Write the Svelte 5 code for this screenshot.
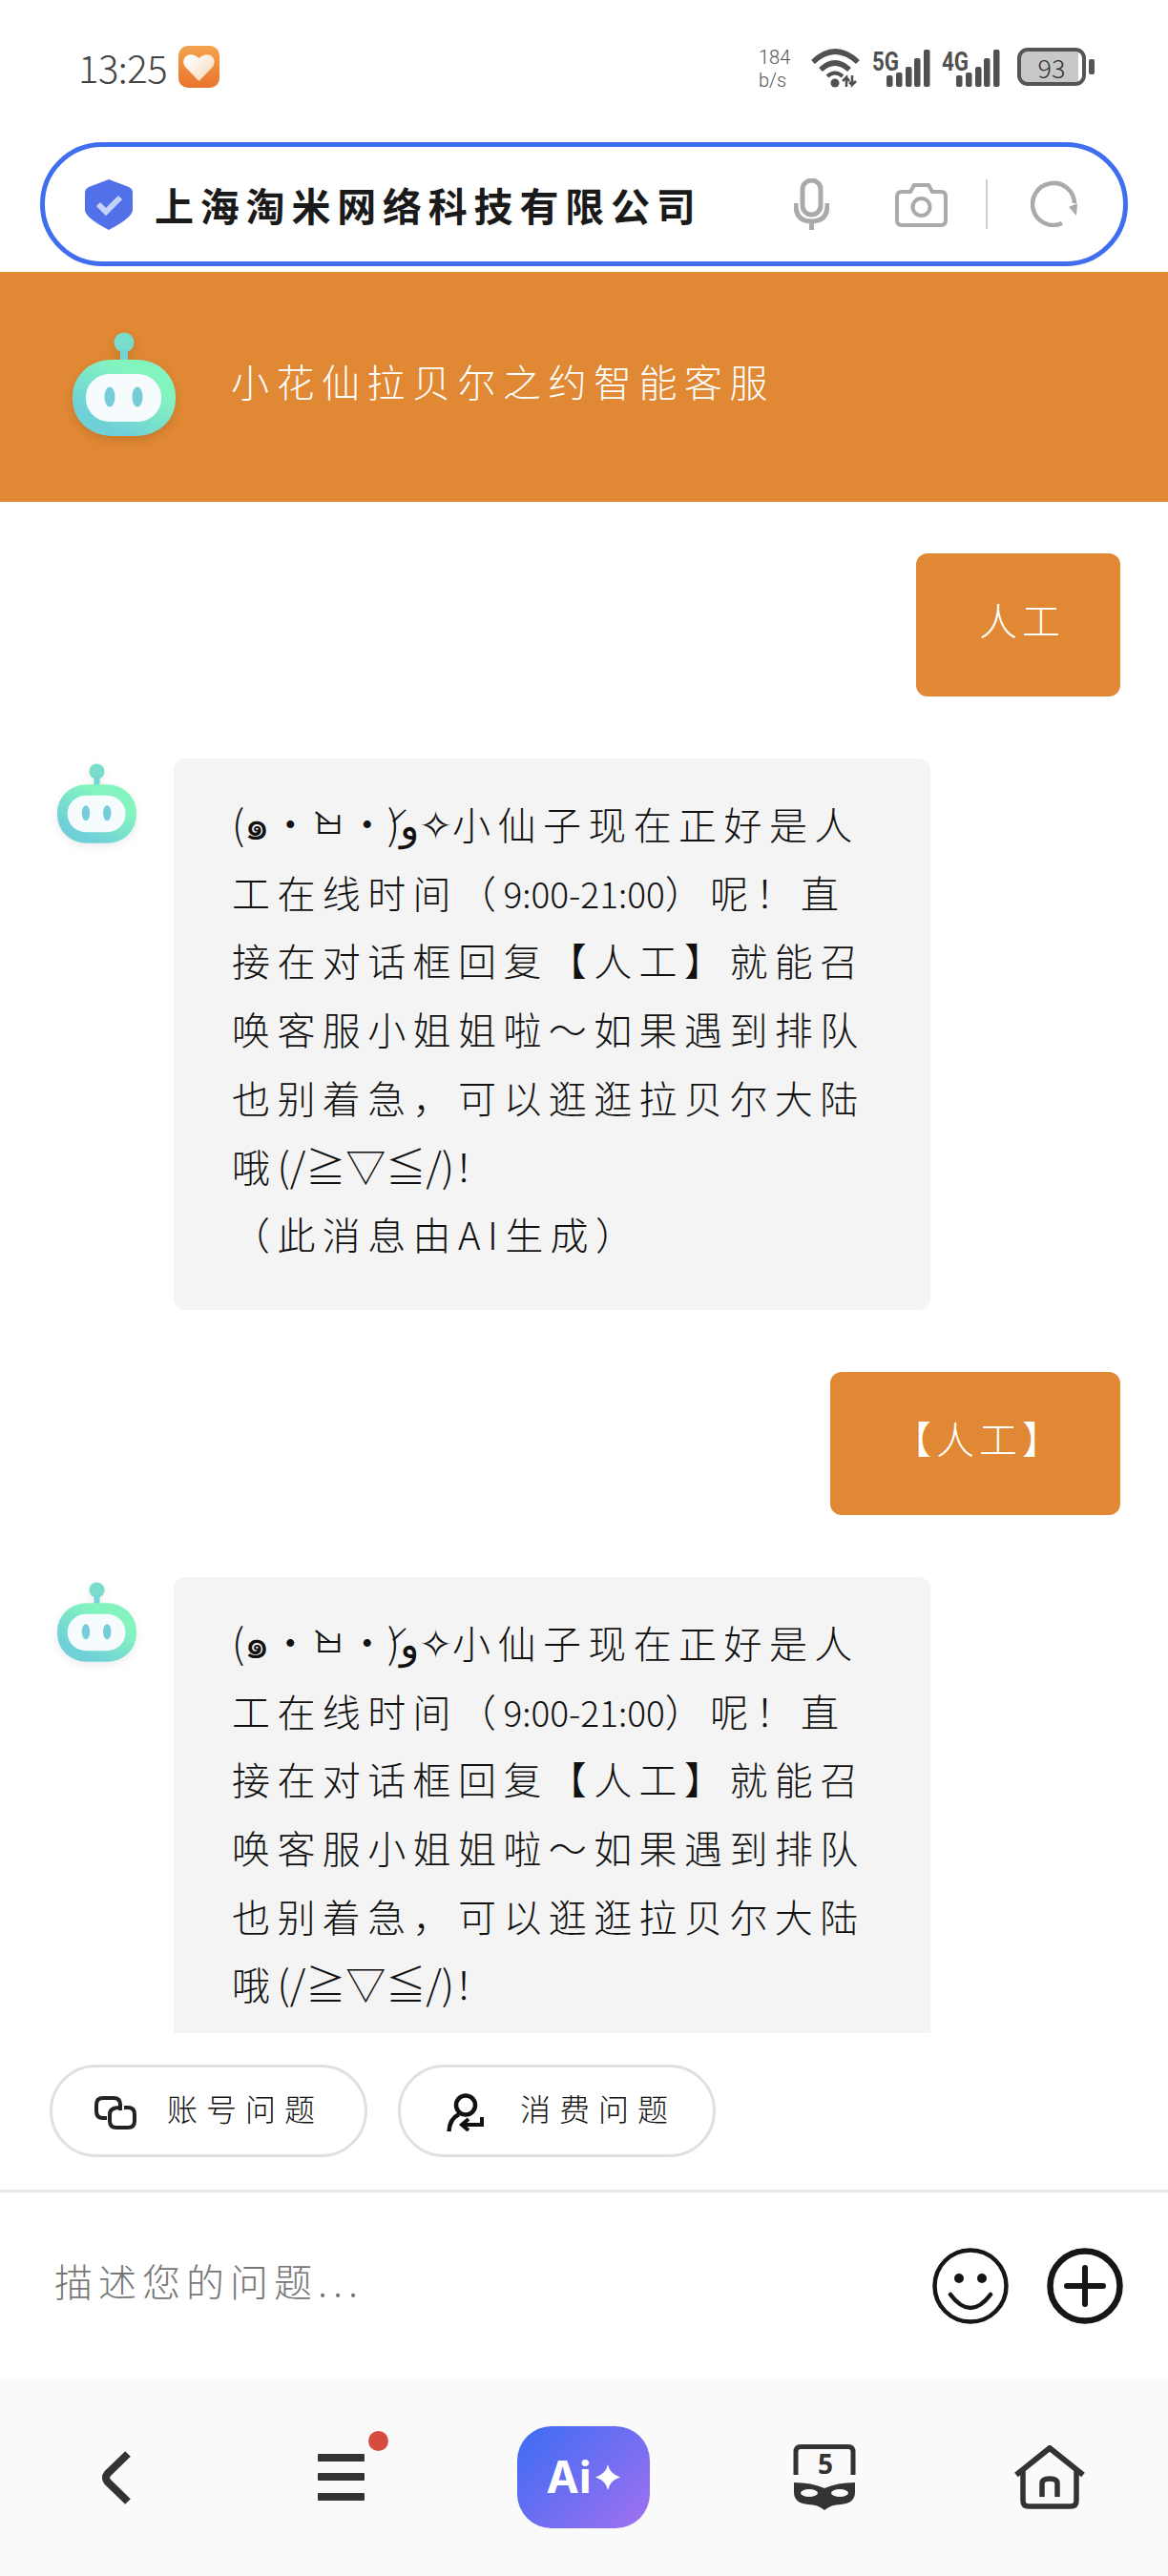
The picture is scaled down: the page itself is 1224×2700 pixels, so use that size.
<script>
  // kao and num parts sit tighter than the rest of the line
  const answer = [
    [{ kao: '(๑•̀ㅂ•́)و✧' }, { text: '小仙子现在正好是人' }],
    [{ text: '工在线时间（' }, { num: '9:00-21:00' }, { text: '）呢！直' }],
    [{ text: '接在对话框回复【人工】就能召' }],
    [{ text: '唤客服小姐姐啦～如果遇到排队' }],
    [{ text: '也别着急，可以逛逛拉贝尔大陆' }],
    [{ text: '哦' }, { kao: '(/≧▽≦/)' }, { text: '！' }],
    [{ text: '（此消息由AI生成）' }]
  ];
  const bars = [
    [0, 12],
    [10, 15],
    [20, 21],
    [29, 30],
    [39, 39]
  ];
</script>

{#snippet robot(cls)}
  <svg class={cls} viewBox="0 0 108 112" aria-hidden="true">
    <defs>
      <linearGradient id="robot-skin" x1="0.85" y1="0.15" x2="0.2" y2="0.95">
        <stop offset="0.2" stop-color="#84f4bf" />
        <stop offset="0.85" stop-color="#6fd0d8" />
      </linearGradient>
    </defs>
    <circle cx="54" cy="11" r="10.5" fill="#7adccb" />
    <rect x="50" y="18" width="8" height="14" fill="#74d6d2" />
    <rect x="0" y="29" width="108" height="80" rx="40" ry="38" fill="url(#robot-skin)" />
    <rect x="14" y="44" width="79" height="50" rx="25" ry="24" fill="#f6fcfd" />
    <ellipse cx="39" cy="68" rx="5.500" ry="10.500" fill="#76ccd8" />
    <ellipse cx="68" cy="68" rx="5.500" ry="10.500" fill="#76ccd8" />
  </svg>
{/snippet}

{#snippet signal(label)}
  <svg class="signal" viewBox="0 0 62 42" aria-hidden="true">
    <text x="0" y="24" textLength="28" lengthAdjust="spacingAndGlyphs">{label}</text>
    {#each bars as [x, h]}
      <rect x={15 + x} y={41 - h} width="6.5" height={h} rx="2" fill="#505050" />
    {/each}
  </svg>
{/snippet}

{#snippet reply(lines)}
  <div class="theirs">
    {@render robot('robot-small')}
    <div class="bubble">
      {#each lines as line}
        <div>
          {#each line as part}
            {#if part.kao}<span class="kao">{part.kao}</span>{:else if part.num}<span class="num">{part.num}</span>{:else}{part.text}{/if}
          {/each}
        </div>
      {/each}
    </div>
  </div>
{/snippet}

<div class="page">
  <div class="status">
    <span class="time">13:25</span>
    <svg class="heart-app" viewBox="0 0 43 44" aria-hidden="true">
      <defs>
        <linearGradient id="heart-bg" x1="0" y1="0" x2="0" y2="1">
          <stop offset="0" stop-color="#f4a24e" />
          <stop offset="1" stop-color="#e8742d" />
        </linearGradient>
        <linearGradient id="heart-fg" x1="0.1" y1="0.1" x2="0.9" y2="0.9">
          <stop offset="0" stop-color="#ffffff" />
          <stop offset="1" stop-color="#f9d9ba" />
        </linearGradient>
      </defs>
      <rect width="43" height="44" rx="10" fill="url(#heart-bg)" />
      <path d="M21.5 37 L7 22 C1 13 12 4 21.5 13 C31 4 42 13 36 22 Z" fill="url(#heart-fg)" />
    </svg>
    <span class="speed">184<br />b/s</span>
    <svg class="wifi" viewBox="0 0 52 42" aria-hidden="true">
      <g fill="none" stroke="#505050" stroke-width="5.5">
        <path d="M2 15 Q25 -7 49 15" />
        <path d="M10 23 Q25 9 40 23" />
        <path d="M17 30 Q25 23 33 30" stroke-width="4" />
      </g>
      <circle cx="25" cy="37" r="4.5" fill="#505050" />
      <path d="M37 41 V31 L33 35 M37 31 L40 35 M43 29 V39 L47 35 M43 39 L40 36" fill="none" stroke="#505050" stroke-width="2.5" />
    </svg>
    {@render signal('5G')}
    {@render signal('4G')}
    <div class="battery">
      <div class="battery-body"><span>93</span></div>
      <i></i>
    </div>
  </div>

  <div class="search-wrap">
    <div class="search">
      <svg class="shield" viewBox="0 0 50 54" aria-hidden="true">
        <path d="M25 1 L46 9 Q50 11 50 15 V33 Q50 41 25 54 Q0 41 0 33 V15 Q0 11 4 9 Z" fill="#5271e8" />
        <path d="M14 27 L22 35 L37 20" fill="none" stroke="#c6d2fa" stroke-width="6" />
      </svg>
      <span class="company">上海淘米网络科技有限公司</span>
      <svg class="mic" viewBox="0 0 37 54" aria-hidden="true">
        <rect x="9" y="2" width="19" height="36" rx="9.5" fill="none" stroke="#aaa" stroke-width="5" />
        <path d="M2 26 V28 Q2 45 18.5 45 Q35 45 35 28 V26 M18.5 45 V54" fill="none" stroke="#aaa" stroke-width="5" />
      </svg>
      <svg class="camera" viewBox="0 0 55 47" aria-hidden="true">
        <path d="M7 10 H16 L20 3 H35 L39 10 H48 Q53 10 53 15 V40 Q53 45 48 45 H7 Q2 45 2 40 V15 Q2 10 7 10 Z" fill="none" stroke="#aaa" stroke-width="4" />
        <circle cx="27.5" cy="26" r="9" fill="none" stroke="#aaa" stroke-width="4" />
      </svg>
      <span class="sep"></span>
      <svg class="refresh" viewBox="0 0 50 50" aria-hidden="true">
        <path d="M46 24 A22 22 0 1 0 33 45" fill="none" stroke="#aaa" stroke-width="4.5" />
        <path d="M40 28 L49 24 L48 37 Z" fill="#aaa" />
      </svg>
    </div>
  </div>

  <header class="banner">
    {@render robot('robot-big')}
    <span class="banner-title">小花仙拉贝尔之约智能客服</span>
  </header>

  <main class="chat">
    <div class="mine">人工</div>
    {@render reply(answer)}
    <div class="mine">【人工】</div>
    <!-- the closing line is scrolled out of view here -->
    {@render reply(answer.slice(0, 6))}
  </main>

  <div class="chips">
    <button type="button" class="chip">
      <svg class="link" viewBox="0 0 44 35" aria-hidden="true">
        <path d="M13 23 H9 Q2 23 2 16 V9 Q2 2 9 2 H20 Q27 2 27 9 V15" fill="none" stroke="#222" stroke-width="4" />
        <path d="M27 12 Q16 12 16 19 V26 Q16 33 23 33 H35 Q42 33 42 26 V19 Q42 12 35 12 H31" fill="none" stroke="#222" stroke-width="4" />
      </svg>
      <span>账号问题</span>
    </button>
    <button type="button" class="chip">
      <svg class="person" viewBox="0 0 40 40" aria-hidden="true">
        <circle cx="20" cy="12.5" r="10" fill="none" stroke="#111" stroke-width="4.5" />
        <path d="M2.5 40 Q3 27 13 22" fill="none" stroke="#111" stroke-width="4.5" />
        <path d="M37 25 V33 H18 M23 27 L16 33 L23 39" fill="none" stroke="#111" stroke-width="4" />
      </svg>
      <span>消费问题</span>
    </button>
  </div>

  <div class="composer">
    <span class="placeholder">描述您的问题...</span>
    <svg class="round-icon" viewBox="0 0 80 80" aria-hidden="true">
      <circle cx="40" cy="40" r="37.5" fill="none" stroke="#161616" stroke-width="4.5" />
      <circle cx="28" cy="32" r="5" fill="#161616" />
      <circle cx="52" cy="32" r="5" fill="#161616" />
      <path d="M19 49 Q40 77 61 49" fill="none" stroke="#161616" stroke-width="4.5" stroke-linecap="round" />
    </svg>
    <svg class="round-icon plus" viewBox="0 0 80 80" aria-hidden="true">
      <circle cx="40" cy="40" r="36.5" fill="none" stroke="#161616" stroke-width="6.5" />
      <path d="M21 40 H59 M40 21 V59" fill="none" stroke="#161616" stroke-width="6" stroke-linecap="round" />
    </svg>
  </div>

  <nav class="nav">
    <svg class="back" viewBox="0 0 32 58" aria-hidden="true">
      <path d="M28 4 L6.5 25 Q3.5 29 6.5 33 L28 54" fill="none" stroke="#333" stroke-width="8" />
    </svg>
    <div class="menu">
      <i></i><i></i><i></i>
      <b class="dot"></b>
    </div>
    <div class="ai">
      <span>Ai</span>
      <svg viewBox="0 0 26 27" aria-hidden="true">
        <path d="M13 0 Q15 10 26 13.5 Q15 17 13 27 Q11 17 0 13.5 Q11 10 13 0 Z" fill="#fff" />
      </svg>
    </div>
    <svg class="five" viewBox="0 0 66 69" aria-hidden="true">
      <path d="M3 32 V8 Q3 2.500 8 2.500 H58 Q63 2.500 63 8 V32" fill="none" stroke="#333" stroke-width="5" />
      <text x="34" y="31" text-anchor="middle">5</text>
      <path d="M1 40 Q20 40 33 46 Q46 40 65 40 V50 Q65 62 50 63 Q40 63 33 69 Q26 63 16 63 Q1 62 1 50 Z" fill="#333" />
      <ellipse cx="17" cy="51" rx="9" ry="4" fill="#fafafa" />
      <ellipse cx="49" cy="51" rx="9" ry="4" fill="#fafafa" />
    </svg>
    <svg class="home" viewBox="0 0 74 67" aria-hidden="true">
      <path d="M2 31 L37 3 L72 31" fill="none" stroke="#333" stroke-width="6" />
      <path d="M9 27 V58 Q9 64 15 64 H59 Q65 64 65 58 V27" fill="none" stroke="#333" stroke-width="5.500" />
      <path d="M29 54 V40 Q29 35 37 35 Q45 35 45 40 V54" fill="none" stroke="#333" stroke-width="5.500" />
    </svg>
  </nav>
</div>

<style>
  :global(body) {
    margin: 0;
    background: #fff;
  }

  .page {
    --cjk: "Noto Sans CJK SC", "Noto Sans", sans-serif;
    width: 1224px;
    height: 2700px;
    display: flex;
    flex-direction: column;
    overflow: hidden;
    font-family: var(--cjk);
    color: #111;
  }

  .status {
    height: 149px;
    flex-shrink: 0;
    box-sizing: border-box;
    padding: 48px 0 0 82px;
    display: flex;
    align-items: flex-start;
  }

  .time {
    width: 105px;
    font-size: 40px;
    font-weight: 300;
    line-height: 44px;
    color: #444;
    letter-spacing: -0.5px;
  }

  .heart-app {
    width: 43px;
    height: 44px;
  }

  .speed {
    margin-left: 565px;
    width: 55px;
    font-family: Roboto, sans-serif;
    font-size: 20px;
    font-weight: 300;
    line-height: 24px;
    color: #555;
  }

  .wifi {
    width: 52px;
    height: 42px;
    margin-top: 2px;
  }

  .signal {
    width: 62px;
    height: 42px;
    margin: 2px 0 0 12px;
  }

  .signal + .signal {
    margin-left: 11px;
  }

  .signal text {
    font-family: "Roboto", sans-serif;
    font-weight: 700;
    font-size: 27px;
    fill: #505050;
  }

  .battery {
    display: flex;
    align-items: center;
    margin: 2px 0 0 17px;
  }

  .battery-body {
    width: 72px;
    height: 40px;
    box-sizing: border-box;
    border: 4px solid #555;
    border-radius: 11px;
    background: linear-gradient(to right, #c8c8c8 93%, #fff 93%);
    display: flex;
    align-items: center;
    justify-content: center;
    font-size: 27px;
    font-weight: 300;
    color: #333;
  }

  .battery i {
    width: 6px;
    height: 16px;
    margin-left: 3px;
    border-radius: 2px;
    background: #555;
  }

  .search-wrap {
    height: 136px;
    flex-shrink: 0;
    padding: 0 42px;
  }

  .search {
    height: 130px;
    box-sizing: border-box;
    border: 5px solid #3f6fee;
    border-radius: 65px;
    padding-left: 42px;
    display: flex;
    align-items: center;
  }

  .shield {
    width: 50px;
    height: 54px;
    flex-shrink: 0;
  }

  .company {
    width: 670px;
    margin-left: 23px;
    font-size: 41px;
    font-weight: 700;
    letter-spacing: 6.800px;
    white-space: nowrap;
    color: #1a1a1a;
  }

  .mic {
    width: 37px;
    height: 54px;
  }

  .camera {
    width: 55px;
    height: 47px;
    margin-left: 69px;
  }

  .sep {
    width: 2px;
    height: 52px;
    margin-left: 40px;
    background: #ccc;
  }

  .refresh {
    width: 50px;
    height: 50px;
    margin-left: 45px;
  }

  .banner {
    height: 241px;
    flex-shrink: 0;
    box-sizing: border-box;
    padding-left: 76px;
    background: #e08833;
    display: flex;
    align-items: center;
    gap: 58px;
    color: #fff;
    font-size: 40px;
    font-weight: 300;
    letter-spacing: 7.500px;
  }

  .banner-title {
    padding-bottom: 14px;
  }

  .robot-big {
    width: 108px;
    height: 112px;
    margin-top: -3px;
    filter: drop-shadow(0 4px 5px rgba(0, 0, 0, 0.12));
  }

  .robot-small {
    width: 83px;
    height: 86px;
    flex-shrink: 0;
    margin-top: 5px;
    filter: drop-shadow(0 3px 4px rgba(0, 0, 0, 0.08));
  }

  .chat {
    height: 1605px;
    flex-shrink: 0;
    box-sizing: border-box;
    padding: 54px 50px 0 60px;
    overflow: hidden;
    display: flex;
    flex-direction: column;
    gap: 65px;
  }

  .mine {
    align-self: flex-end;
    padding: 33px 58px 45px 66px;
    background: #e08833;
    border-radius: 12px;
    color: #fff;
    font-size: 40px;
    font-weight: 300;
    line-height: 72px;
    letter-spacing: 5px;
  }

  .theirs {
    display: flex;
    align-items: flex-start;
    flex-shrink: 0;
    gap: 39px;
  }

  .bubble {
    width: 793px;
    box-sizing: border-box;
    padding: 33px 0 43px 61px;
    background: #f4f4f4;
    border-radius: 12px;
    font-size: 40px;
    font-weight: 300;
    line-height: 71.700px;
    letter-spacing: 7.400px;
    white-space: nowrap;
    color: #111;
  }

  /* line-height 0 keeps the odd font sizes from stretching the 71.7px lines */
  .kao {
    font-size: 42px;
    line-height: 0;
    letter-spacing: 0;
  }

  .num {
    font-size: 37px;
    line-height: 0;
    letter-spacing: 0;
  }

  .chips {
    height: 167px;
    flex-shrink: 0;
    box-sizing: border-box;
    padding: 33px 0 0 52px;
    display: flex;
    align-items: flex-start;
    gap: 32px;
    border-bottom: 3px solid #e8e8e8;
  }

  .chip {
    width: 333px;
    height: 97px;
    box-sizing: border-box;
    padding: 0 0 0 42px;
    border: 3px solid #e0e0e0;
    border-radius: 49px;
    background: #fff;
    display: flex;
    align-items: center;
    font-family: var(--cjk);
    font-size: 32px;
    font-weight: 300;
    letter-spacing: 9px;
    color: #111;
  }

  .chip span {
    padding-bottom: 8px;
  }

  .link {
    width: 44px;
    height: 35px;
    margin: 3px 32px 0 2px;
  }

  .person {
    width: 40px;
    height: 40px;
    margin: 2px 37px 0 6px;
  }

  .composer {
    flex: 1;
    display: flex;
    align-items: center;
    padding: 0 47px 0 57px;
  }

  .placeholder {
    padding-bottom: 10px;
    font-size: 40px;
    font-weight: 300;
    letter-spacing: 6px;
    color: #777;
    margin-right: auto;
  }

  .round-icon {
    width: 80px;
    height: 80px;
    margin-top: 2px;
  }

  .plus {
    margin-left: 40px;
  }

  .nav {
    height: 208px;
    flex-shrink: 0;
    box-sizing: border-box;
    padding: 0 0 0 106px;
    background: #fafafa;
    display: flex;
    align-items: center;
  }

  .back {
    width: 32px;
    height: 58px;
    margin-top: 2px;
  }

  .menu {
    position: relative;
    width: 49px;
    margin-left: 195px;
    display: flex;
    flex-direction: column;
    gap: 12.500px;
  }

  .menu i {
    height: 8px;
    background: #333;
    border-radius: 1px;
  }

  .dot {
    position: absolute;
    left: 53px;
    top: -24px;
    width: 21px;
    height: 21px;
    border-radius: 50%;
    background: #d64c40;
  }

  .ai {
    width: 139px;
    height: 107px;
    margin-left: 160px;
    border-radius: 36px;
    background: linear-gradient(135deg, #3a6cf3, #a270f0);
    display: flex;
    align-items: center;
    justify-content: center;
    gap: 5px;
    color: #fff;
    font-family: Inter, sans-serif;
    font-size: 46px;
    font-weight: 700;
  }

  .ai svg {
    width: 26px;
    height: 27px;
    flex-shrink: 0;
  }

  .five {
    width: 66px;
    height: 69px;
    margin-left: 150px;
  }

  .five text {
    font-family: "Open Sans", sans-serif;
    font-size: 28px;
    font-weight: 700;
    fill: #333;
  }

  .home {
    width: 74px;
    height: 67px;
    margin-left: 166px;
  }
</style>
